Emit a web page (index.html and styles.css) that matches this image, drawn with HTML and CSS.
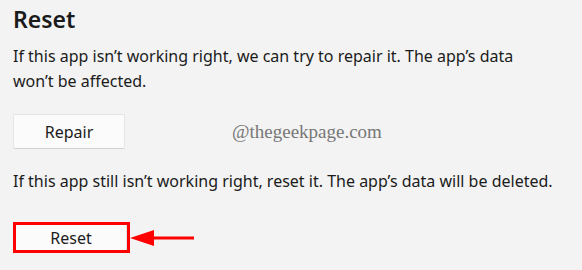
FILE: index.html
```html
<!DOCTYPE html>
<html lang="en">

<head>
    <meta charset="UTF-8" />
    <meta name="viewport" content="width=device-width, initial-scale=1" />
    <title>Reset</title>
    <link rel="stylesheet" href="styles.css">
</head>

<body>
    <div class="section">
        <h2 class="title">Reset</h2>
        <p class="desc first">If this app isn’t working right, we can try to repair it. The app’s data won’t be affected.</p>

        <div class="row">
            <button class="btn">Repair</button>
            <span class="watermark">@thegeekpage.com</span>
        </div>

        <p class="desc second">If this app still isn’t working right, reset it. The app’s data will be deleted.</p>

        <div class="row reset-row">
            <div class="highlight">
                <button class="btn btn-reset">Reset</button>
            </div>
            <svg class="arrow" width="64" height="18" viewBox="0 0 64 18">
                <polygon points="0,9 24,1 24,17" fill="#f00" />
                <rect x="22" y="7.5" width="42" height="3" fill="#f00" />
            </svg>
        </div>
    </div>
</body>

</html>
```

FILE: styles.css
```css
body {
    margin: 0;
    background-color: #f3f3f3;
    color: #1b1b1b;
    font-family: "Noto Sans", "Open Sans", sans-serif;
}

.section {
    padding: 0 13px;
}

.title {
    margin: 0;
    padding-top: 3px;
    font-size: 23px;
    font-weight: 600;
    line-height: 32px;
}

.desc {
    margin: 9px 0 0;
    font-size: 16px;
    line-height: 25px;
}

.desc.first {
    max-width: 530px;
}

.desc.second {
    margin-top: 20px;
}

.row {
    display: flex;
    align-items: center;
    margin-top: 20px;
}

.btn {
    width: 112px;
    height: 35px;
    padding: 0;
    font-family: inherit;
    font-size: 16px;
    color: #1b1b1b;
    background-color: #fbfbfb;
    border: 1px solid #e5e5e5;
    border-bottom-color: #d0d0d0;
    border-radius: 2px;
}

.watermark {
    margin-left: 107px;
    font-family: "Liberation Serif", serif;
    font-size: 19px;
    color: #777;
}

.reset-row {
    margin-top: 28px;
}

.highlight {
    border: 3px solid #f00;
    background-color: #fbfbfb;
}

.btn-reset {
    display: block;
    width: 111px;
    height: 25px;
    border: none;
    border-right: 1px solid #e2e2e2;
    border-radius: 0;
}

.arrow {
    margin-left: 0;
}
```
